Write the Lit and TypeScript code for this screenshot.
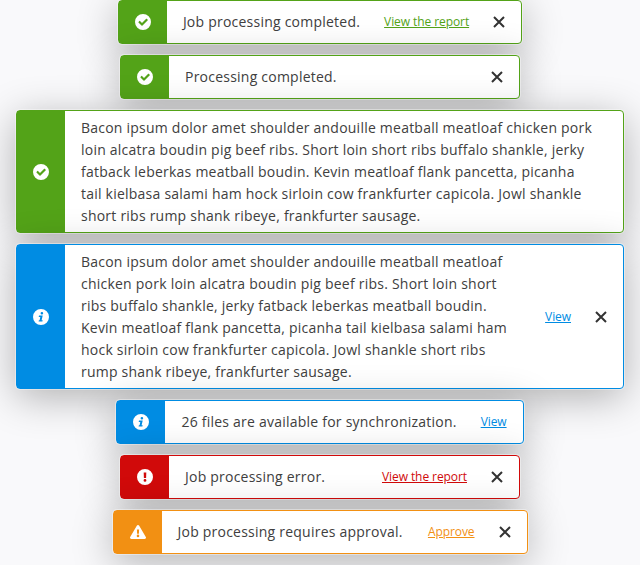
import { LitElement, html, css, svg } from "lit";

type Kind = "success" | "info" | "error" | "warning";

const icons = {
  success: svg`<path fill-rule="evenodd" d="M8 0a8 8 0 1 0 0 16A8 8 0 0 0 8 0zM12.8 6.200 7.500 11.500a.7.7 0 0 1-1 0L3.500 8.500a.4.4 0 0 1 0-.6l.9-.9a.4.4 0 0 1 .6 0l2 2 4.200-4.200a.4.4 0 0 1 .6 0l.9.9a.4.4 0 0 1 .1.5z"/>`,
  info: svg`<path fill-rule="evenodd" d="M8 0a8 8 0 1 0 0 16A8 8 0 0 0 8 0zM8.900 2.900a1.300 1.300 0 1 1 0 2.600 1.300 1.300 0 0 1 0-2.600zM6 6.500h3.700L8.600 11.200H9.700L9.400 12.600H5.600L5.900 11.200H6.600L7.300 7.900H5.700z"/>`,
  error: svg`<path fill-rule="evenodd" d="M8 0a8 8 0 1 0 0 16A8 8 0 0 0 8 0zM6.700 3.400h2.600L9.100 9H6.900zM8 10a1.400 1.400 0 1 1 0 2.800 1.400 1.400 0 0 1 0-2.800z"/>`,
  warning: svg`<path fill-rule="evenodd" d="M6.800 1.700a1.400 1.400 0 0 1 2.400 0l6.600 11.200a1.400 1.400 0 0 1-1.200 2.100H1.400a1.400 1.400 0 0 1-1.200-2.100zM6.900 5.500 7.100 9.800h1.800l.2-4.300zM8 10.600a1.300 1.300 0 1 0 0 2.600 1.300 1.300 0 0 0 0-2.600z"/>`,
};

class ToastMessage extends LitElement {
  static properties = {
    kind: { reflect: true },
    text: {},
    action: {},
    closable: { type: Boolean },
  };
  declare kind: Kind;
  declare text: string;
  declare action: string;
  declare closable: boolean;

  static styles = css`
    :host { display: flex; box-sizing: border-box; max-width: 608px; background: #fff; border: 1px solid var(--tone); border-radius: 4px; box-shadow: 0 0 0 1px rgba(255, 255, 255, 0.4), 0 8px 40px rgba(0, 0, 0, 0.3); color: #404040; font: 14px/22px "Open Sans", sans-serif; }
    :host([kind="success"]) { --tone: #53a318; }
    :host([kind="info"]) { --tone: #008ce3; }
    :host([kind="error"]) { --tone: #d10a0a; }
    :host([kind="warning"]) { --tone: #f29013; }
    .mark { flex: 0 0 48px; display: flex; align-items: center; justify-content: center; background: var(--tone); }
    .mark svg { width: 16px; height: 16px; fill: #fff; }
    .body { flex: 1; display: flex; align-items: center; padding: 0 16px; }
    .text { flex: 1; padding: 5.9375px 0 5.0625px; letter-spacing: 0.228px; }
    .text:last-child { margin-right: 14px; }
    .action { margin-left: 24px; color: var(--tone); font-size: 12px; letter-spacing: -0.08px; text-decoration: underline; white-space: nowrap; }
    .close { margin-left: 24px; width: 12px; height: 12px; flex: none; stroke: #333; stroke-width: 2; }
  `;

  render() {
    return html`<div class="mark"><svg viewBox="0 0 16 16">${icons[this.kind]}</svg></div>
      <div class="body">
        <div class="text">${this.text}</div>
        ${this.action ? html`<a class="action">${this.action}</a>` : ""}
        ${this.closable ? html`<svg class="close" viewBox="0 0 12 12"><path d="M1 1 11 11M11 1 1 11"/></svg>` : ""}
      </div>`;
  }
}
customElements.define("toast-message", ToastMessage);

const bacon = "Bacon ipsum dolor amet shoulder andouille meatball meatloaf chicken pork loin alcatra boudin pig beef ribs. Short loin short ribs buffalo shankle, jerky fatback leberkas meatball boudin. Kevin meatloaf flank pancetta, picanha tail kielbasa salami ham hock sirloin cow frankfurter capicola. Jowl shankle short ribs rump shank ribeye, frankfurter sausage.";

class AppRoot extends LitElement {
  static styles = css`
    :host { display: flex; flex-direction: column; align-items: center; gap: 11px; height: 565px; overflow: hidden; background: #f9f9fb; }
    toast-message { min-width: 400px; min-height: 44px; flex: none; }
    .completed { min-width: 404px; }
    .sync { min-width: 407px; }
    .approval { min-width: 415px; }
  `;
  render() {
    return html`
      <toast-message class="completed" kind="success" text="Job processing completed." action="View the report" closable></toast-message>
      <toast-message kind="success" text="Processing completed." closable></toast-message>
      <toast-message kind="success" text=${bacon}></toast-message>
      <toast-message kind="info" text=${bacon} action="View" closable></toast-message>
      <toast-message class="sync" kind="info" text="26 files are available for synchronization." action="View"></toast-message>
      <toast-message kind="error" text="Job processing error." action="View the report" closable></toast-message>
      <toast-message class="approval" kind="warning" text="Job processing requires approval." action="Approve" closable></toast-message>
    `;
  }
}
customElements.define("app-root", AppRoot);
